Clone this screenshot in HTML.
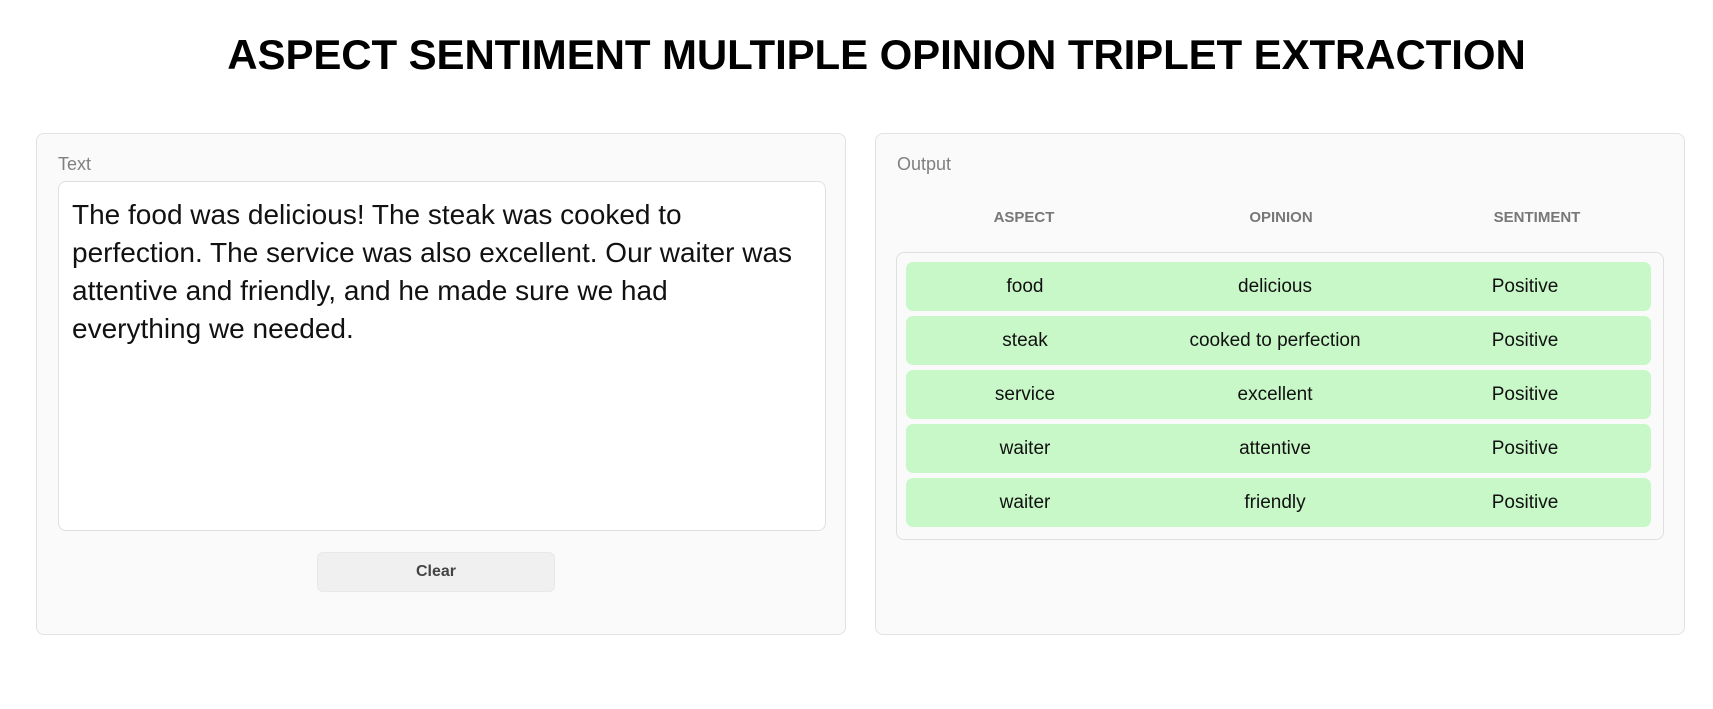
<!DOCTYPE html>
<html><head><meta charset="utf-8"><style>
*{box-sizing:border-box;margin:0;padding:0}
body{width:1713px;height:709px;background:#fff;font-family:"Liberation Sans",sans-serif;position:relative;overflow:hidden}
h1{position:absolute;top:31px;left:20px;width:1713px;text-align:center;font-size:42px;font-weight:bold;color:#000;letter-spacing:-0.1px}
.panel{position:absolute;top:133px;width:810px;height:502px;background:#fafafa;border:1px solid #e2e2e2;border-radius:8px}
.lbl{position:absolute;top:20px;left:21px;font-size:18px;color:#808080}
.ta{position:absolute;left:21px;top:47px;width:768px;height:350px;background:#fff;border:1px solid #e0e0e0;border-radius:8px;padding:14px 13px;font-size:28px;line-height:38px;color:#111;white-space:nowrap}
.btn{position:absolute;left:280px;top:418px;width:238px;height:40px;background:#f0f0f0;border:1px solid #e8e8e8;border-radius:6px;text-align:center;line-height:38px;font-size:16px;font-weight:bold;color:#444}
.hdr{position:absolute;top:75px;font-size:15px;font-weight:bold;color:#777;transform:translateX(-50%)}
.tbl{position:absolute;left:20px;top:118px;width:768px;height:288px;border:1px solid #e0e0e0;border-radius:8px;background:#fafafa}
.row{position:absolute;left:9px;width:745px;height:49px;background:#c8f8c8;border-radius:7px;font-size:19px;color:#111}
.row span{position:absolute;top:14px;transform:translateX(-50%);white-space:nowrap}
</style></head><body>
<h1>ASPECT SENTIMENT MULTIPLE OPINION TRIPLET EXTRACTION</h1>
<div class="panel" style="left:36px">
<div class="lbl">Text</div>
<div class="ta">The food was delicious! The steak was cooked to<br>perfection. The service was also excellent. Our waiter was<br>attentive and friendly, and he made sure we had<br>everything we needed.</div>
<div class="btn">Clear</div>
</div>
<div class="panel" style="left:875px">
<div class="lbl">Output</div>
<div class="hdr" style="left:148px">ASPECT</div>
<div class="hdr" style="left:405px">OPINION</div>
<div class="hdr" style="left:661px">SENTIMENT</div>
<div class="tbl">
<div class="row" style="top:9px"><span style="left:119px">food</span><span style="left:369px">delicious</span><span style="left:619px">Positive</span></div>
<div class="row" style="top:63px"><span style="left:119px">steak</span><span style="left:369px">cooked to perfection</span><span style="left:619px">Positive</span></div>
<div class="row" style="top:117px"><span style="left:119px">service</span><span style="left:369px">excellent</span><span style="left:619px">Positive</span></div>
<div class="row" style="top:171px"><span style="left:119px">waiter</span><span style="left:369px">attentive</span><span style="left:619px">Positive</span></div>
<div class="row" style="top:225px"><span style="left:119px">waiter</span><span style="left:369px">friendly</span><span style="left:619px">Positive</span></div>
</div>
</div>
</body></html>
